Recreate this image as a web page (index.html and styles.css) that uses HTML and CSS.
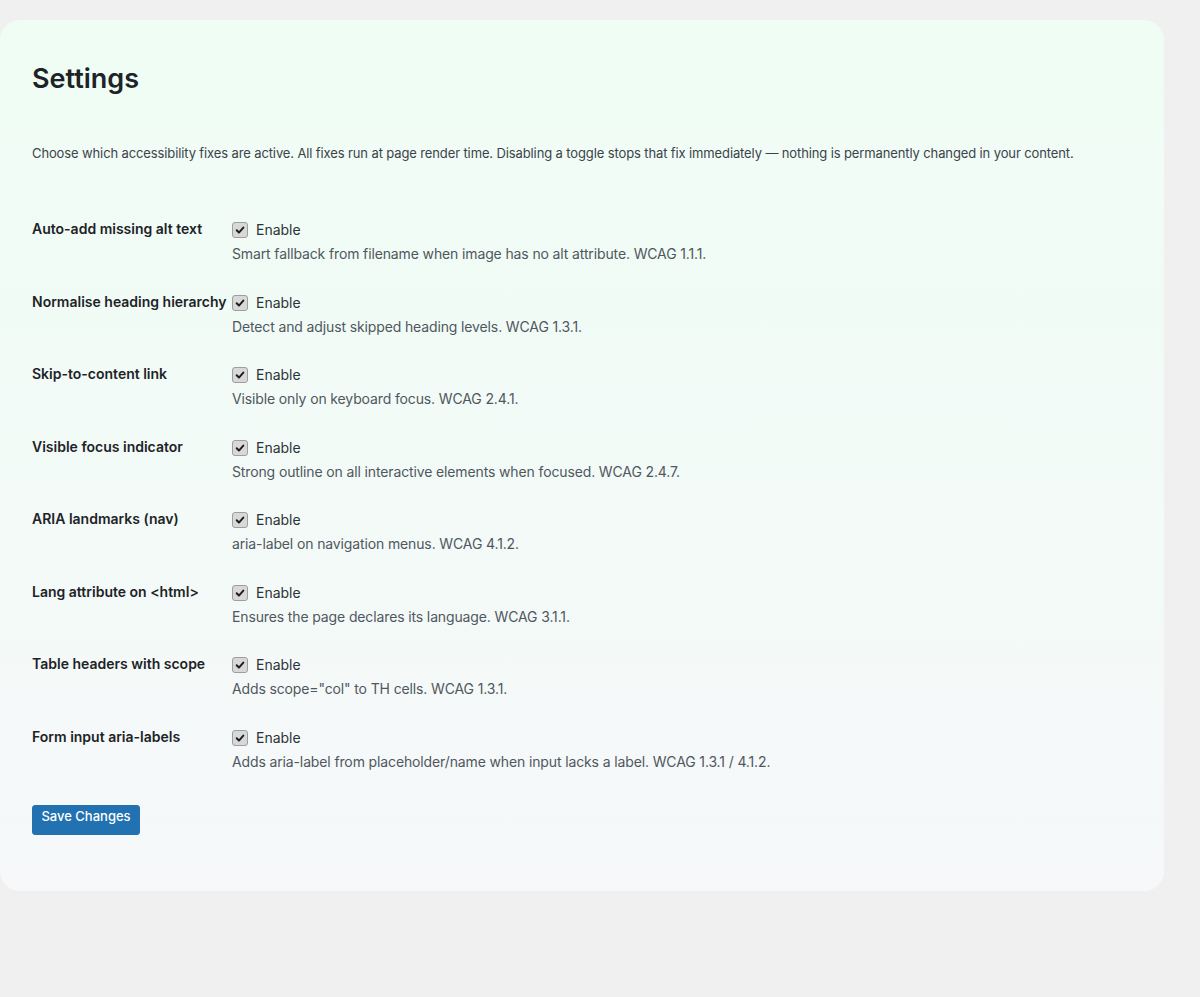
FILE: index.html
```html
<!DOCTYPE html>
<html lang="en">
<head>
<meta charset="utf-8">
<title>Settings</title>
<link rel="stylesheet" href="styles.css">
</head>
<body>
<div class="card">
  <h1 class="title">Settings</h1>
  <p class="intro">Choose which accessibility fixes are active. All fixes run at page render time. Disabling a toggle stops that fix immediately — nothing is permanently changed in your content.</p>
  <div class="rows">
    <div class="row">
      <div class="label">Auto-add missing alt text</div>
      <div class="field">
        <label class="check"><span class="box"><svg viewBox="0 0 16 16" width="16" height="16"><path d="M4.2 8.3 L6.8 10.9 L11.8 5.2" fill="none" stroke="#1d1d1f" stroke-width="2.2" stroke-linecap="round" stroke-linejoin="round"/></svg></span>Enable</label>
        <p class="desc">Smart fallback from filename when image has no alt attribute. WCAG 1.1.1.</p>
      </div>
    </div>
    <div class="row">
      <div class="label">Normalise heading hierarchy</div>
      <div class="field">
        <label class="check"><span class="box"><svg viewBox="0 0 16 16" width="16" height="16"><path d="M4.2 8.3 L6.8 10.9 L11.8 5.2" fill="none" stroke="#1d1d1f" stroke-width="2.2" stroke-linecap="round" stroke-linejoin="round"/></svg></span>Enable</label>
        <p class="desc">Detect and adjust skipped heading levels. WCAG 1.3.1.</p>
      </div>
    </div>
    <div class="row">
      <div class="label">Skip-to-content link</div>
      <div class="field">
        <label class="check"><span class="box"><svg viewBox="0 0 16 16" width="16" height="16"><path d="M4.2 8.3 L6.8 10.9 L11.8 5.2" fill="none" stroke="#1d1d1f" stroke-width="2.2" stroke-linecap="round" stroke-linejoin="round"/></svg></span>Enable</label>
        <p class="desc">Visible only on keyboard focus. WCAG 2.4.1.</p>
      </div>
    </div>
    <div class="row">
      <div class="label">Visible focus indicator</div>
      <div class="field">
        <label class="check"><span class="box"><svg viewBox="0 0 16 16" width="16" height="16"><path d="M4.2 8.3 L6.8 10.9 L11.8 5.2" fill="none" stroke="#1d1d1f" stroke-width="2.2" stroke-linecap="round" stroke-linejoin="round"/></svg></span>Enable</label>
        <p class="desc">Strong outline on all interactive elements when focused. WCAG 2.4.7.</p>
      </div>
    </div>
    <div class="row">
      <div class="label">ARIA landmarks (nav)</div>
      <div class="field">
        <label class="check"><span class="box"><svg viewBox="0 0 16 16" width="16" height="16"><path d="M4.2 8.3 L6.8 10.9 L11.8 5.2" fill="none" stroke="#1d1d1f" stroke-width="2.2" stroke-linecap="round" stroke-linejoin="round"/></svg></span>Enable</label>
        <p class="desc">aria-label on navigation menus. WCAG 4.1.2.</p>
      </div>
    </div>
    <div class="row">
      <div class="label">Lang attribute on &lt;html&gt;</div>
      <div class="field">
        <label class="check"><span class="box"><svg viewBox="0 0 16 16" width="16" height="16"><path d="M4.2 8.3 L6.8 10.9 L11.8 5.2" fill="none" stroke="#1d1d1f" stroke-width="2.2" stroke-linecap="round" stroke-linejoin="round"/></svg></span>Enable</label>
        <p class="desc">Ensures the page declares its language. WCAG 3.1.1.</p>
      </div>
    </div>
    <div class="row">
      <div class="label">Table headers with scope</div>
      <div class="field">
        <label class="check"><span class="box"><svg viewBox="0 0 16 16" width="16" height="16"><path d="M4.2 8.3 L6.8 10.9 L11.8 5.2" fill="none" stroke="#1d1d1f" stroke-width="2.2" stroke-linecap="round" stroke-linejoin="round"/></svg></span>Enable</label>
        <p class="desc">Adds scope="col" to TH cells. WCAG 1.3.1.</p>
      </div>
    </div>
    <div class="row">
      <div class="label">Form input aria-labels</div>
      <div class="field">
        <label class="check"><span class="box"><svg viewBox="0 0 16 16" width="16" height="16"><path d="M4.2 8.3 L6.8 10.9 L11.8 5.2" fill="none" stroke="#1d1d1f" stroke-width="2.2" stroke-linecap="round" stroke-linejoin="round"/></svg></span>Enable</label>
        <p class="desc">Adds aria-label from placeholder/name when input lacks a label. WCAG 1.3.1 / 4.1.2.</p>
      </div>
    </div>
  </div>
  <button class="save" type="button">Save Changes</button>
</div>
</body>
</html>
```

FILE: styles.css
```css
html, body {
  margin: 0;
  padding: 0;
  background: #f0f0f1;
}
body {
  font-family: Inter, "Noto Sans", "Liberation Sans", sans-serif;
  color: #1d2327;
  padding-top: 20px;
  padding-bottom: 40px;
}
.card {
  width: 1164px;
  box-sizing: border-box;
  border-radius: 20px;
  background: linear-gradient(180deg, #effdf4 0%, #f6f8fa 100%);
  padding: 42px 32px 56px;
}
.title {
  margin: 0;
  font-size: 27px;
  line-height: 34px;
  font-weight: 600;
  color: #1d2327;
}
.intro {
  margin: 47px 0 0;
  font-size: 13px;
  line-height: 20px;
  letter-spacing: -0.12px;
  color: #3c434a;
}
.rows {
  margin-top: 56px;
  display: flex;
  flex-direction: column;
  gap: 27.5px;
}
.row {
  display: grid;
  grid-template-columns: 200px 1fr;
}
.label {
  font-size: 14px;
  font-weight: 600;
  line-height: 20px;
  color: #1d2327;
}
.check {
  display: flex;
  align-items: center;
  font-size: 14px;
  line-height: 20px;
  color: #2c3338;
  height: 20px;
  margin-top: 1px;
}
.box {
  width: 16px;
  height: 16px;
  box-sizing: border-box;
  border: 1px solid #9e9e9e;
  border-radius: 3px;
  background: #d8d8d8;
  margin-right: 8px;
  display: flex;
  align-items: center;
  justify-content: center;
}
.box svg {
  display: block;
  width: 14px;
  height: 14px;
}
.desc {
  margin: 4px 0 0;
  font-size: 14px;
  line-height: 20px;
  letter-spacing: -0.13px;
  color: #50575e;
}
.save {
  margin-top: 33px;
  display: block;
  width: 108px;
  height: 30px;
  padding: 0 0 10px;
  border: 1px solid #2271b1;
  border-radius: 3px;
  background: #2271b1;
  color: #ffffff;
  font-family: Inter, "Noto Sans", "Liberation Sans", sans-serif;
  font-size: 13px;
  line-height: 20px;
  font-weight: 500;
}
```
